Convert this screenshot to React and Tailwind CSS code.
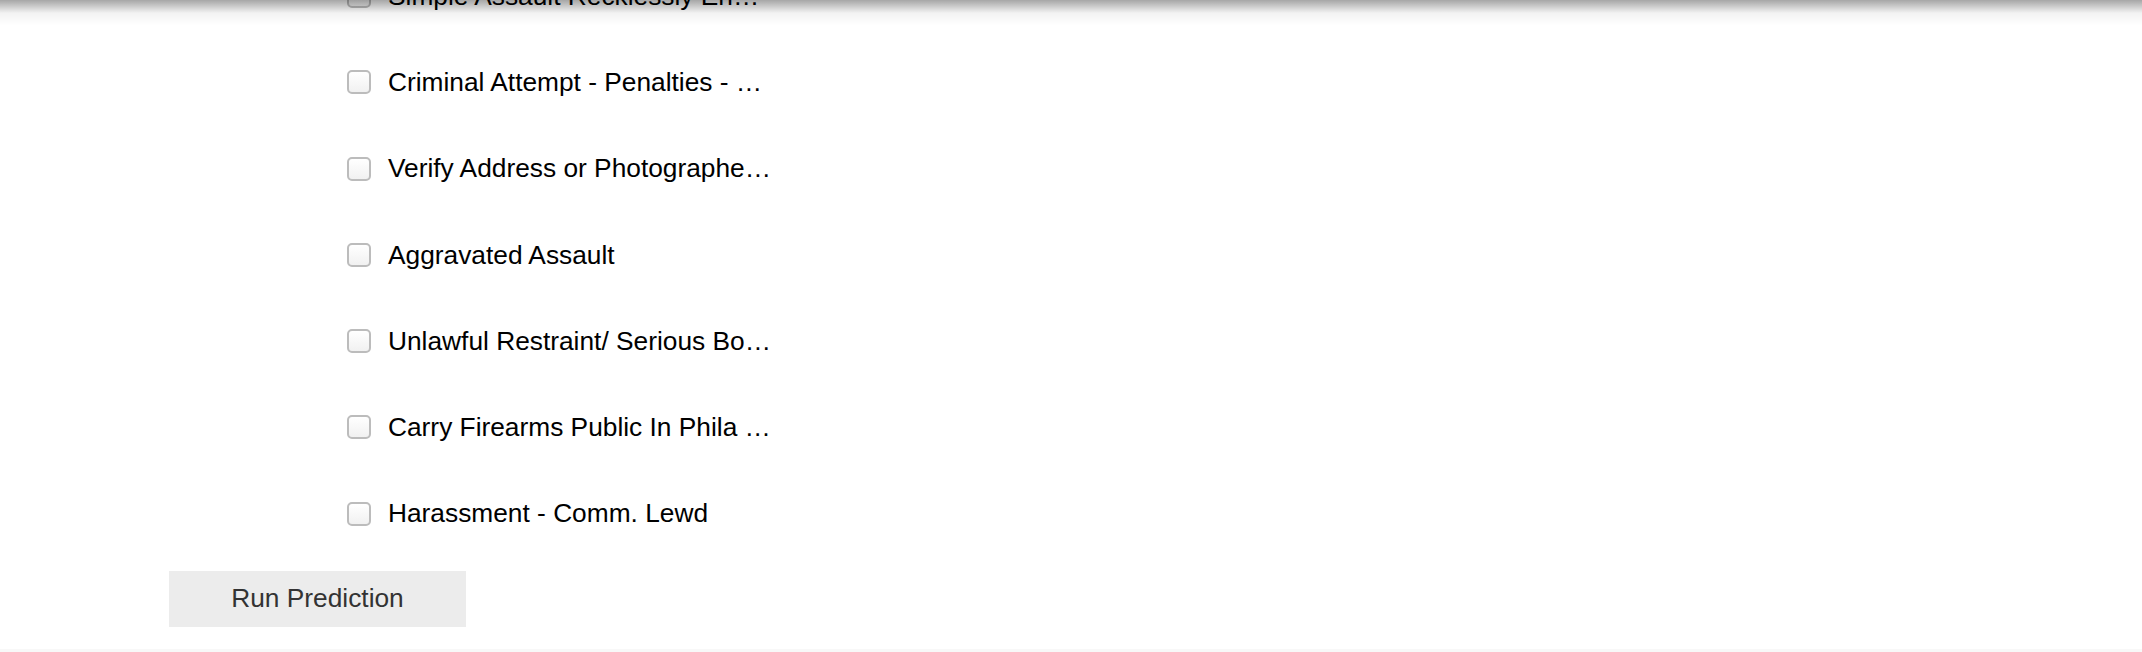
const charges = [
  "Simple Assault Recklessly En…",
  "Criminal Attempt - Penalties - …",
  "Verify Address or Photographe…",
  "Aggravated Assault",
  "Unlawful Restraint/ Serious Bo…",
  "Carry Firearms Public In Phila …",
  "Harassment - Comm. Lewd",
]

function ChargeRow({ label }) {
  return (
    <li className="h-[86.25px] flex items-center">
      <span className="w-6 h-6 shrink-0 rounded-[5px] border-2 border-[#bcbcbc] bg-gradient-to-b from-white to-[#f1f1f1]" />
      <span className="ml-[17px] whitespace-nowrap text-[26.3px] leading-none text-black">{label}</span>
    </li>
  )
}

export default function App() {
  return (
    <div
      className="relative h-[652px] w-full overflow-hidden bg-white flex flex-col"
      style={{ fontFamily: '"Liberation Sans", Arial, Helvetica, sans-serif' }}
    >
      {/* shadow cast by the fixed header above */}
      <div className="pointer-events-none absolute inset-x-0 top-0 h-[26px] bg-gradient-to-b from-black/35 via-black/5 to-transparent" />

      <div className="flex-1 pl-[169px]">
        <ul className="mt-[-47px] pl-[178px]">
          {charges.map((c) => (
            <ChargeRow key={c} label={c} />
          ))}
        </ul>

        <button className="mt-[14px] w-[297px] h-[56px] bg-[#ececec] text-[26.3px] text-[#333]">
          Run Prediction
        </button>
      </div>

      <div className="h-[3px] bg-[#f8f8f8]" />
    </div>
  )
}
